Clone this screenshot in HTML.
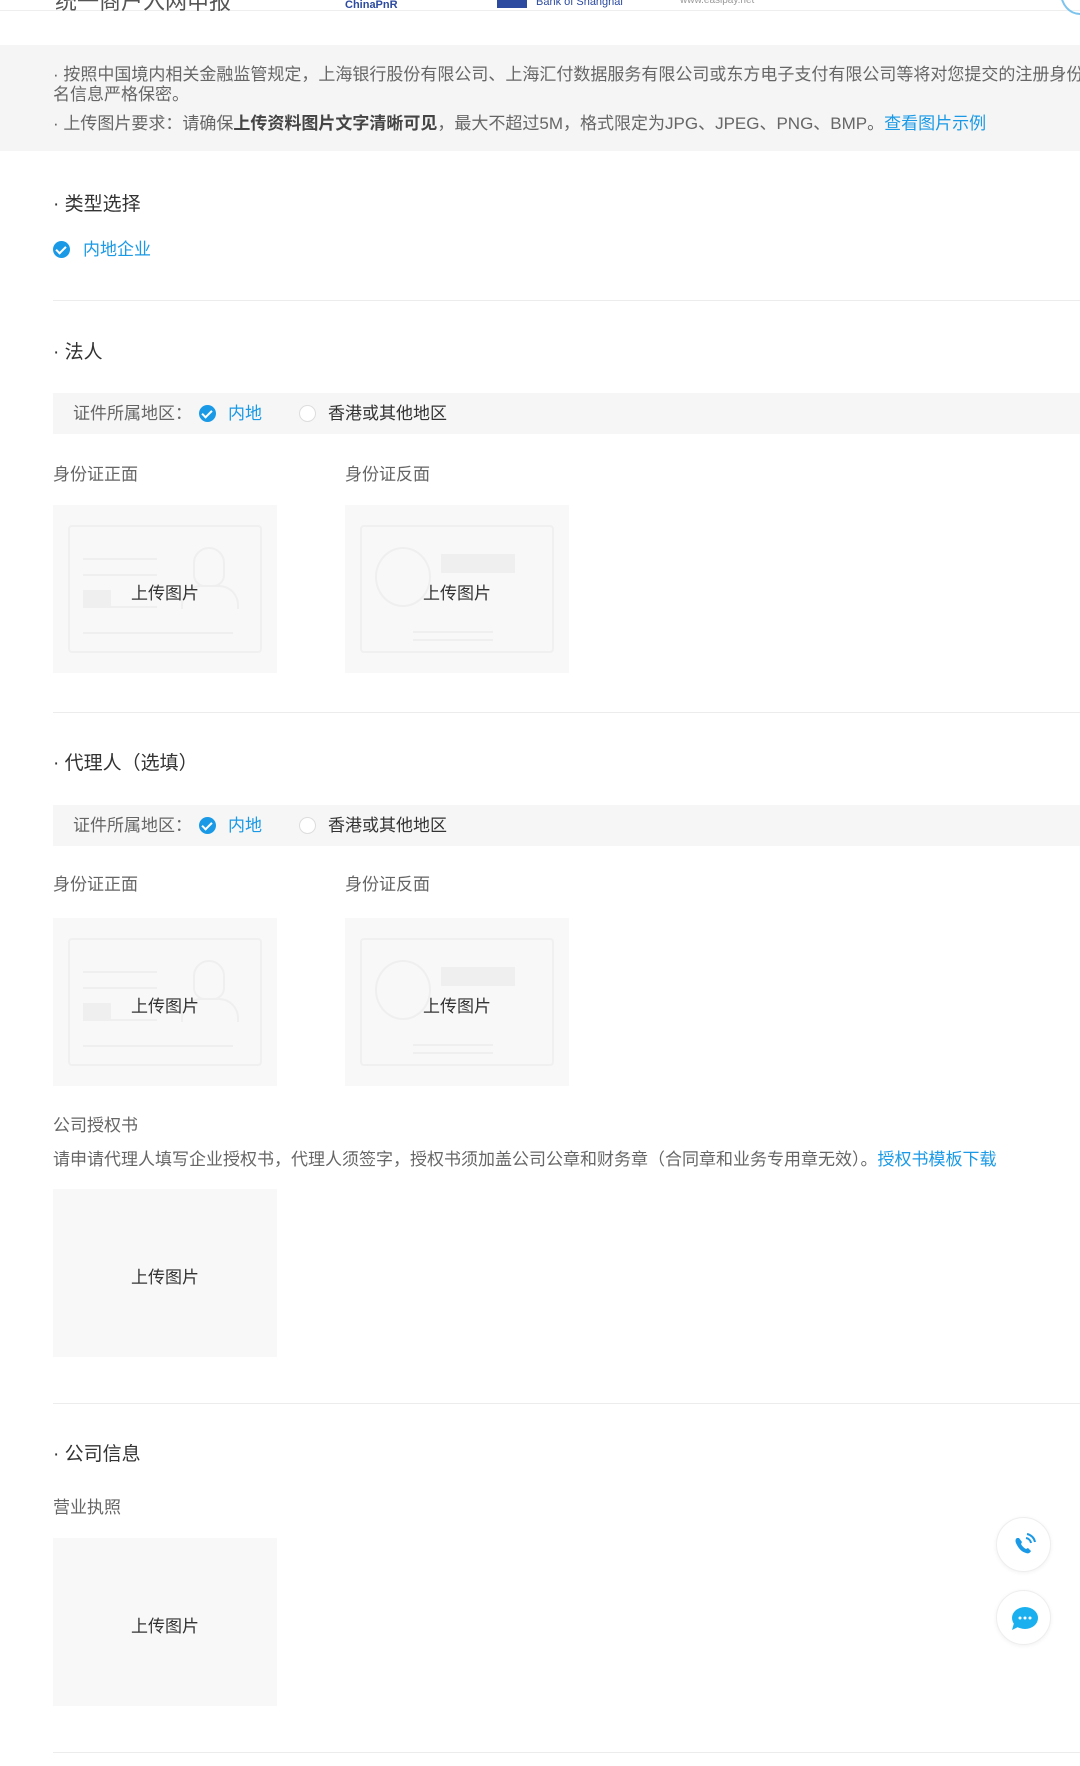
<!DOCTYPE html>
<html><head><meta charset="utf-8"><style>
*{margin:0;padding:0;box-sizing:border-box}
body{width:1080px;height:1766px;background:#fff;position:relative;overflow:hidden;font-family:"Liberation Sans","Noto Sans CJK SC",sans-serif;color:#666}
.a{position:absolute;white-space:nowrap}
.t{font-size:17px;line-height:20px}
.h{font-size:19px;color:#333;line-height:24px}
.blue{color:#1a9ae6}
.sep{position:absolute;left:53px;right:0;height:1px;background:#ececec}
.row{position:absolute;left:53px;right:0;height:41px;background:#f6f6f6}
.box{position:absolute;width:224px;height:168px;background:#f8f8f8}
.box .lbl{position:absolute;left:0;right:0;top:74px;text-align:center;font-size:17px;color:#333}
.card{position:absolute;left:15px;top:20px;width:194px;height:128px;border:2px solid #f0f0f0;border-radius:4px}
.ln{position:absolute;height:2px;background:#efefef}
.blk{position:absolute;background:#efefef}
.chk{position:absolute;width:17px;height:17px;border-radius:50%;background:#1a9ae6}
.chk:after{content:"";position:absolute;left:5px;top:3px;width:4px;height:8px;border:solid #fff;border-width:0 2px 2px 0;transform:rotate(45deg)}
.rad{position:absolute;width:17px;height:17px;border-radius:50%;border:1px solid #ddd;background:#fff}
.fab{position:absolute;left:996px;width:55px;height:55px;border-radius:50%;background:#fff;border:1px solid #eee;box-shadow:0 1px 4px rgba(0,0,0,.06)}
</style></head><body>
<div class="a" style="left:0;right:0;top:10px;height:1px;background:#eee"></div>
<div class="a" style="left:55px;top:-16px;font-size:22px;color:#555">统一商户入网申报</div>
<div class="a" style="left:345px;top:-1px;font-size:11px;color:#2b4aa0;font-weight:bold">ChinaPnR</div>
<div class="a" style="left:497px;top:0;width:30px;height:8px;background:#2b4aa0"></div>
<div class="a" style="left:536px;top:-4px;font-size:11px;color:#2b4aa0">Bank of Shanghai</div>
<div class="a" style="left:680px;top:-5px;font-size:10px;color:#999">www.easipay.net</div>
<div class="a" style="left:1060px;top:-30px;width:40px;height:45px;border-radius:50%;border:2px solid #7cc4ee"></div>

<div class="a" style="left:0;right:0;top:45px;height:106px;background:#f5f5f5"></div>
<div class="a t" style="left:53px;top:65px">· 按照中国境内相关金融监管规定，上海银行股份有限公司、上海汇付数据服务有限公司或东方电子支付有限公司等将对您提交的注册身份</div>
<div class="a t" style="left:53px;top:85px">名信息严格保密。</div>
<div class="a t" style="left:53px;top:114px">· 上传图片要求：请确保<b style="color:#444">上传资料图片文字清晰可见</b>，最大不超过5M，格式限定为JPG、JPEG、PNG、BMP。<span class="blue">查看图片示例</span></div>

<div class="a h" style="left:53px;top:193px">· 类型选择</div>
<div class="chk" style="left:53px;top:241px"></div>
<div class="a t blue" style="left:83px;top:240px">内地企业</div>
<div class="sep" style="top:300px"></div>

<div class="a h" style="left:53px;top:341px">· 法人</div>
<div class="row" style="top:393px"></div>
<div class="a t" style="left:73px;top:404px">证件所属地区：</div>
<div class="chk" style="left:199px;top:405px"></div>
<div class="a t blue" style="left:228px;top:404px">内地</div>
<div class="rad" style="left:299px;top:405px"></div>
<div class="a t" style="left:328px;top:404px;color:#333">香港或其他地区</div>
<div class="a t" style="left:53px;top:465px">身份证正面</div>
<div class="a t" style="left:345px;top:465px">身份证反面</div>
<div class="box" style="left:53px;top:505px"><div class="card"></div><div class="ln" style="left:30px;top:53px;width:74px"></div><div class="ln" style="left:30px;top:69px;width:74px"></div><div class="blk" style="left:30px;top:85px;width:28px;height:17px"></div><div class="ln" style="left:30px;top:101px;width:74px"></div><div class="ln" style="left:30px;top:127px;width:150px"></div><div style="position:absolute;left:140px;top:42px;width:32px;height:40px;border:2px solid #efefef;border-radius:16px 16px 12px 12px"></div><div style="position:absolute;left:128px;top:80px;width:58px;height:24px;border:2px solid #efefef;border-bottom:0;border-radius:20px 20px 0 0"></div><div class="lbl">上传图片</div></div>
<div class="box" style="left:345px;top:505px"><div class="card"></div><div style="position:absolute;left:30px;top:42px;width:56px;height:60px;border:2px solid #efefef;border-radius:50%"></div><div class="blk" style="left:96px;top:49px;width:74px;height:19px"></div><div class="ln" style="left:68px;top:126px;width:80px"></div><div class="ln" style="left:68px;top:134px;width:80px"></div><div class="lbl">上传图片</div></div>
<div class="sep" style="top:712px"></div>

<div class="a h" style="left:53px;top:752px">· 代理人（选填）</div>
<div class="row" style="top:805px"></div>
<div class="a t" style="left:73px;top:816px">证件所属地区：</div>
<div class="chk" style="left:199px;top:817px"></div>
<div class="a t blue" style="left:228px;top:816px">内地</div>
<div class="rad" style="left:299px;top:817px"></div>
<div class="a t" style="left:328px;top:816px;color:#333">香港或其他地区</div>
<div class="a t" style="left:53px;top:875px">身份证正面</div>
<div class="a t" style="left:345px;top:875px">身份证反面</div>
<div class="box" style="left:53px;top:918px"><div class="card"></div><div class="ln" style="left:30px;top:53px;width:74px"></div><div class="ln" style="left:30px;top:69px;width:74px"></div><div class="blk" style="left:30px;top:85px;width:28px;height:17px"></div><div class="ln" style="left:30px;top:101px;width:74px"></div><div class="ln" style="left:30px;top:127px;width:150px"></div><div style="position:absolute;left:140px;top:42px;width:32px;height:40px;border:2px solid #efefef;border-radius:16px 16px 12px 12px"></div><div style="position:absolute;left:128px;top:80px;width:58px;height:24px;border:2px solid #efefef;border-bottom:0;border-radius:20px 20px 0 0"></div><div class="lbl">上传图片</div></div>
<div class="box" style="left:345px;top:918px"><div class="card"></div><div style="position:absolute;left:30px;top:42px;width:56px;height:60px;border:2px solid #efefef;border-radius:50%"></div><div class="blk" style="left:96px;top:49px;width:74px;height:19px"></div><div class="ln" style="left:68px;top:126px;width:80px"></div><div class="ln" style="left:68px;top:134px;width:80px"></div><div class="lbl">上传图片</div></div>

<div class="a t" style="left:53px;top:1116px">公司授权书</div>
<div class="a t" style="left:53px;top:1150px">请申请代理人填写企业授权书，代理人须签字，授权书须加盖公司公章和财务章（合同章和业务专用章无效）。<span class="blue">授权书模板下载</span></div>
<div class="box" style="left:53px;top:1189px"><div class="lbl">上传图片</div></div>
<div class="sep" style="top:1403px"></div>

<div class="a h" style="left:53px;top:1443px">· 公司信息</div>
<div class="a t" style="left:53px;top:1498px">营业执照</div>
<div class="box" style="left:53px;top:1538px"><div class="lbl">上传图片</div></div>
<div class="sep" style="top:1752px"></div>

<div class="fab" style="top:1517px"><svg width="55" height="55" viewBox="0 0 55 55"><path d="M20 20c-2 1-2 4 0 7 2 4 5 7 9 8 2 1 4 0 5-2l-3-3-2 1c-2-1-4-3-5-5l1-2-3-4z" fill="#1a9ae6"/><path d="M29 20a6 6 0 0 1 5 5M30 16a10 10 0 0 1 8 8" stroke="#1a9ae6" stroke-width="2" fill="none"/></svg></div>
<div class="fab" style="top:1590px"><svg width="55" height="55" viewBox="0 0 55 55"><ellipse cx="28" cy="27" rx="13" ry="11" fill="#1ab0f0"/><path d="M17 32l-2 7 8-4z" fill="#1ab0f0"/><circle cx="23" cy="27" r="1.5" fill="#fff"/><circle cx="28" cy="27" r="1.5" fill="#fff"/><circle cx="33" cy="27" r="1.5" fill="#fff"/></svg></div>
</body></html>
